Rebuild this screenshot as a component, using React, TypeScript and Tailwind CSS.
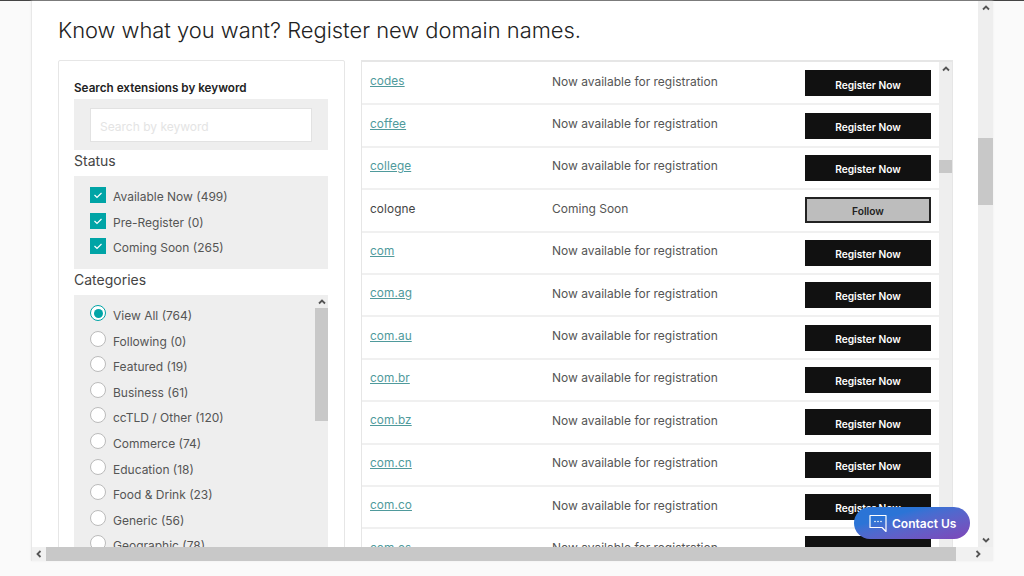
const FONT = "font-['Inter','Liberation_Sans',sans-serif]";

const STATUS = ["Available Now (499)", "Pre-Register (0)", "Coming Soon (265)"];

const CATEGORIES = [
  "View All (764)",
  "Following (0)",
  "Featured (19)",
  "Business (61)",
  "ccTLD / Other (120)",
  "Commerce (74)",
  "Education (18)",
  "Food & Drink (23)",
  "Generic (56)",
  "Geographic (78)",
];

const ROWS = [
  "codes",
  "coffee",
  "college",
  "cologne",
  "com",
  "com.ag",
  "com.au",
  "com.br",
  "com.bz",
  "com.cn",
  "com.co",
  "com.es",
];

function Arrow({ dir, className = "" }: { dir: "up" | "down" | "left" | "right"; className?: string }) {
  const d = {
    up: "M2 6.5 L5 3.5 L8 6.5",
    down: "M2 3.5 L5 6.5 L8 3.5",
    left: "M6.5 2 L3.5 5 L6.5 8",
    right: "M3.5 2 L6.5 5 L3.5 8",
  }[dir];
  return (
    <svg viewBox="0 0 10 10" className={`h-[10px] w-[10px] ${className}`}>
      <path d={d} fill="none" stroke="#555" strokeWidth="1.8" />
    </svg>
  );
}

function VScroll({ thumbTop, thumbHeight, width }: { thumbTop: string; thumbHeight: string; width: string }) {
  return (
    <div className={`${width} flex shrink-0 flex-col items-center bg-[#eeeeee]`}>
      <div className="flex h-[13px] items-center">
        <Arrow dir="up" />
      </div>
      <div className={`${thumbTop} ${thumbHeight} w-full bg-[#c8c8c8]`} />
    </div>
  );
}

function Row({ name }: { name: string }) {
  const soon = name === "cologne";
  return (
    <div className="flex h-[42.4px] shrink-0 items-center border-b-2 border-[#f0f0f0] pl-[8px] pr-[8px] first:mt-px">
      <div className="-mt-[2px] w-[182px] text-[11.8px] tracking-[0.1px]">
        {soon ? (
          <span className="text-[#444]">{name}</span>
        ) : (
          <a className="text-[#4f9a9c] underline">{name}</a>
        )}
      </div>
      <div className="-mt-[3px] flex-1 text-[12px] text-[#555]">
        {soon ? "Coming Soon" : "Now available for registration"}
      </div>
      {soon ? (
        <button className="h-[26px] w-[126px] border-2 border-[#222] bg-[#bdbdbd] pt-[2px] text-[10.2px] font-semibold text-[#222]">
          Follow
        </button>
      ) : (
        <button className="h-[26px] w-[126px] bg-[#111111] pt-[4px] text-[10.2px] font-semibold text-white">
          Register Now
        </button>
      )}
    </div>
  );
}

export default function App() {
  return (
    <div className={`${FONT} relative flex h-[576px] w-[1024px] flex-col overflow-hidden bg-[#fafafa]`}>
      <div className="h-px shrink-0 bg-[#444]" />
      <div className="ml-[31px] flex h-[560px] w-[962px] flex-col border-l border-[#e8e8e8] shadow-[0_0_2px_#eee]">
        <div className="flex min-h-0 flex-1">
          <div className="min-w-0 flex-1 overflow-hidden bg-white pl-[26px]">
            <h1 className="mt-[16px] h-[27px] text-[21.9px] leading-[26px] font-light text-[#222]">
              Know what you want? Register new domain names.
            </h1>
            <div className="mt-[16px] flex h-[600px] gap-[16px]">
              {/* filters */}
              <div className="h-full w-[287px] shrink-0 rounded-[2px] border border-[#e6e6e6] pl-[15px] pr-[16px] pt-[21px]">
                <div className="h-[17px] text-[11.7px] leading-[13px] font-semibold text-[#222]">
                  Search extensions by keyword
                </div>
                <div className="h-[51px] bg-[#eeeeee] pt-[9px] pl-[16px]">
                  <input
                    placeholder="Search by keyword"
                    className="h-[34px] w-[222px] border border-[#e2e2e2] bg-white px-[9px] pt-[2px] text-[12px] placeholder:text-[#e4e4e4]"
                  />
                </div>
                <div className="h-[26px] text-[14px] leading-[21px] text-[#444]">Status</div>
                <div className="flex h-[93px] flex-col gap-[9.5px] bg-[#eeeeee] pt-[11px] pl-[16px]">
                  {STATUS.map((s) => (
                    <div key={s} className="flex h-[16px] items-center gap-[7px]">
                      <span className="flex h-[16px] w-[16px] items-center justify-center bg-[#00a4a6]">
                        <svg viewBox="0 0 16 16" className="h-[16px] w-[16px]">
                          <path d="M4.5 8 L7 10.5 L11.5 6" fill="none" stroke="#fff" strokeWidth="1.2" />
                        </svg>
                      </span>
                      <span className="mt-[4px] text-[12px] text-[#555]">{s}</span>
                    </div>
                  ))}
                </div>
                <div className="h-[26px] text-[14px] leading-[21px] text-[#444]">Categories</div>
                <div className="flex h-[300px] bg-[#eeeeee]">
                  <div className="flex flex-1 flex-col gap-[9.6px] pt-[10px] pl-[16px]">
                    {CATEGORIES.map((c, i) => (
                      <div key={c} className="flex h-[16px] items-center gap-[7px]">
                        <span
                          className={`flex h-[16px] w-[16px] items-center justify-center rounded-full border bg-white ${
                            i === 0 ? "border-[#00a4a6]" : "border-[#bbbbbb]"
                          }`}
                        >
                          {i === 0 && <span className="h-[9px] w-[9px] rounded-full bg-[#00a4a6]" />}
                        </span>
                        <span className="mt-[6px] text-[12px] text-[#555]">{c}</span>
                      </div>
                    ))}
                  </div>
                  <VScroll width="w-[13px]" thumbTop="" thumbHeight="h-[113px]" />
                </div>
              </div>
              {/* extension list */}
              <div className="flex h-full w-[592px] shrink-0 border border-t-2 border-[#e6e6e6]">
                <div className="flex min-w-0 flex-1 flex-col overflow-hidden">
                  {ROWS.map((r) => (
                    <Row key={r} name={r} />
                  ))}
                </div>
                <VScroll width="w-[13px]" thumbTop="mt-[85px]" thumbHeight="h-[13px]" />
              </div>
            </div>
          </div>
          <div className="flex w-[15px] shrink-0 flex-col items-center justify-between bg-[#eeeeee]">
            <div className="flex w-full flex-col items-center">
              <div className="flex h-[14px] items-center">
                <Arrow dir="up" />
              </div>
              <div className="mt-[123px] h-[67px] w-full bg-[#c8c8c8]" />
            </div>
            <div className="flex h-[14px] items-center">
              <Arrow dir="down" />
            </div>
          </div>
        </div>
        <div className="flex h-[14px] shrink-0 items-center bg-[#f1f1f1]">
          <div className="flex w-[14px] items-center justify-center">
            <Arrow dir="left" />
          </div>
          <div className="h-full w-[910px] bg-[#c8c8c8]" />
          <div className="flex flex-1 items-center justify-center pl-[6px]">
            <Arrow dir="right" />
          </div>
        </div>
      </div>
      {/* chat button floats over the page */}
      <button className="absolute top-[507px] left-[854px] flex h-[32px] w-[116px] items-center gap-[4px] rounded-full bg-gradient-to-br from-[#2b74d6] from-30% to-[#7d45b8] pl-[14px] text-[12px] font-semibold text-white">
        <svg viewBox="0 0 20 20" className="h-[20px] w-[20px]">
          <path d="M2 2.5 H18 V18.5 L14 14.5 H2 Z" fill="none" stroke="#fff" strokeWidth="1.2" strokeLinejoin="round" />
          <circle cx="7" cy="8.5" r="0.8" fill="#fff" />
          <circle cx="10" cy="8.5" r="0.8" fill="#fff" />
          <circle cx="13" cy="8.5" r="0.8" fill="#fff" />
        </svg>
        <span className="mt-[2px]">Contact Us</span>
      </button>
    </div>
  );
}
